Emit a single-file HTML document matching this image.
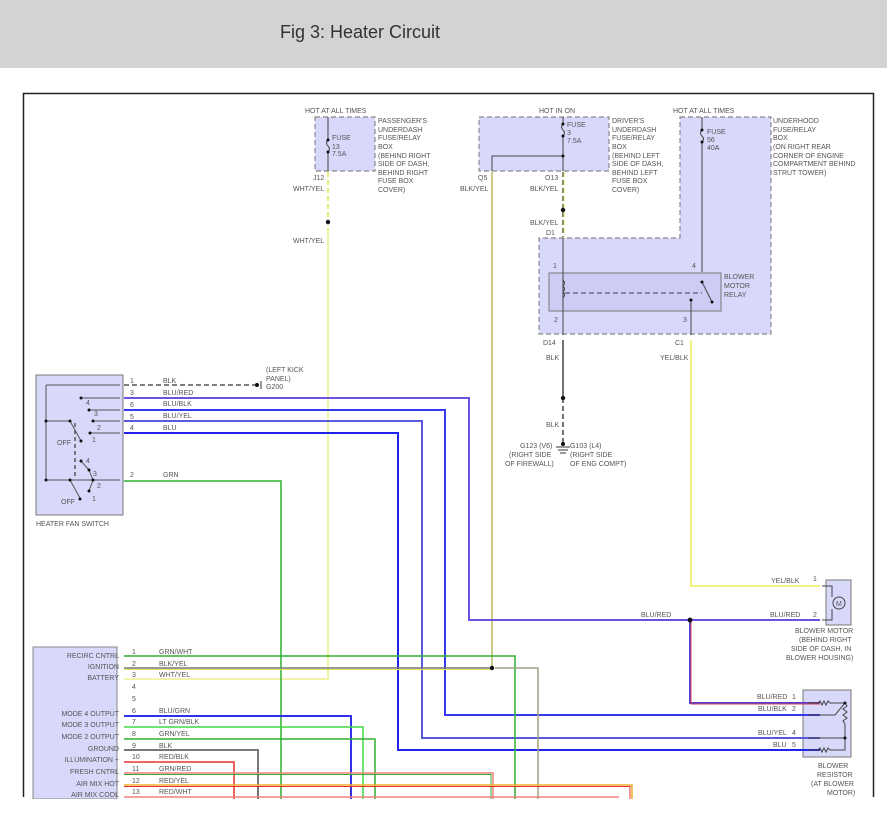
<!DOCTYPE html>
<html><head><meta charset="utf-8"><style>
html,body{margin:0;padding:0;background:#fff;width:887px;height:815px;overflow:hidden}
.hdr{position:absolute;left:0;top:0;width:887px;height:68px;background:#d3d3d3}
.hdr span{position:absolute;left:280px;top:22px;font:18px "Liberation Sans",sans-serif;color:#333}
svg{position:absolute;left:0;top:0}
text{font-family:"Liberation Sans",sans-serif;font-size:7px;fill:#555}
</style></head><body>
<div class="hdr"><span>Fig 3: Heater Circuit</span></div>
<svg width="887" height="815" viewBox="0 0 887 815">
<path d="M23.5 797 V93.5 H873.5 V797" fill="none" stroke="#222" stroke-width="1.5"/>

<g fill="#d8d8fb" stroke="#888" stroke-width="1.2" stroke-dasharray="5,3">
<rect x="315" y="117" width="60" height="54"/>
<rect x="479" y="117" width="130" height="54"/>
<path d="M680 117 H771 V334 H539 V238 H680 Z"/>
</g>
<rect x="549" y="273" width="172" height="38" fill="#ccccf5" stroke="#777" stroke-width="1"/>
<rect x="36" y="375" width="87" height="140" fill="#d8d8fb" stroke="#777"/>
<rect x="33" y="647" width="84" height="152" fill="#d8d8fb" stroke="#888"/>
<rect x="826" y="580" width="25" height="45" fill="#d8d8fb" stroke="#777"/>
<rect x="803" y="690" width="48" height="67" fill="#d8d8fb" stroke="#777"/>

<text x="305" y="113">HOT AT ALL TIMES</text>
<text x="539" y="113">HOT IN ON</text>
<text x="673" y="113">HOT AT ALL TIMES</text>
<g>
<text x="378" y="123">PASSENGER'S</text><text x="378" y="132">UNDERDASH</text><text x="378" y="140">FUSE/RELAY</text><text x="378" y="149">BOX</text><text x="378" y="158">(BEHIND RIGHT</text><text x="378" y="166">SIDE OF DASH,</text><text x="378" y="175">BEHIND RIGHT</text><text x="378" y="183">FUSE BOX</text><text x="378" y="192">COVER)</text>
<text x="612" y="123">DRIVER'S</text><text x="612" y="132">UNDERDASH</text><text x="612" y="140">FUSE/RELAY</text><text x="612" y="149">BOX</text><text x="612" y="158">(BEHIND LEFT</text><text x="612" y="166">SIDE OF DASH,</text><text x="612" y="175">BEHIND LEFT</text><text x="612" y="183">FUSE BOX</text><text x="612" y="192">COVER)</text>
<text x="773" y="123">UNDERHOOD</text><text x="773" y="132">FUSE/RELAY</text><text x="773" y="140">BOX</text><text x="773" y="149">(ON RIGHT REAR</text><text x="773" y="158">CORNER OF ENGINE</text><text x="773" y="166">COMPARTMENT BEHIND</text><text x="773" y="175">STRUT TOWER)</text>
</g>
<g stroke="#444" fill="none" stroke-width="1">
<path d="M328 117 V140 q-3 3 0 6 q3 3 0 6 V171"/>
<path d="M563 117 V124 q-3 3 0 6 q3 3 0 6 V171 M563 156 H492 V171"/>
<path d="M702 117 V130 q-3 3 0 6 q3 3 0 6 V272"/>
</g>
<g fill="#111"><circle cx="328" cy="140" r="1.5"/><circle cx="328" cy="152" r="1.5"/><circle cx="563" cy="124" r="1.5"/><circle cx="563" cy="136" r="1.5"/><circle cx="563" cy="156" r="1.5"/><circle cx="702" cy="130" r="1.5"/><circle cx="702" cy="142" r="1.5"/></g>
<text x="332" y="140">FUSE</text><text x="332" y="149">13</text><text x="332" y="156">7.5A</text>
<text x="567" y="127">FUSE</text><text x="567" y="135">3</text><text x="567" y="143">7.5A</text>
<text x="707" y="134">FUSE</text><text x="707" y="142">56</text><text x="707" y="150">40A</text>

<text x="313" y="180">J12</text><text x="293" y="191">WHT/YEL</text><text x="293" y="243">WHT/YEL</text>
<text x="478" y="180">Q5</text><text x="460" y="191">BLK/YEL</text>
<text x="545" y="180">O13</text><text x="530" y="191">BLK/YEL</text><text x="530" y="225">BLK/YEL</text><text x="546" y="235">D1</text>
<text x="553" y="268">1</text><text x="692" y="268">4</text><text x="554" y="322">2</text><text x="683" y="322">3</text>
<text x="543" y="345">D14</text><text x="546" y="360">BLK</text><text x="675" y="345">C1</text><text x="660" y="360">YEL/BLK</text>
<text x="546" y="427">BLK</text>
<text x="724" y="279">BLOWER</text><text x="724" y="288">MOTOR</text><text x="724" y="297">RELAY</text>

<path d="M328 172 V230" stroke="#e6e650" stroke-width="1.5" stroke-dasharray="5,3"/>
<path d="M328 230 V679 H124" fill="none" stroke="#eeee88" stroke-width="1.5"/>
<circle cx="328" cy="222" r="2.2" fill="#111"/>
<path d="M492 172 V668" stroke="#b8b860" stroke-width="1.5"/>
<path d="M563 172 V237" stroke="#555" stroke-width="1.5" stroke-dasharray="5,3"/>
<path d="M564 172 V237" stroke="#e6e650" stroke-width="1" stroke-dasharray="5,3"/>
<circle cx="563" cy="210" r="2.2" fill="#111"/>
<g stroke="#444" fill="none" stroke-width="1">
<path d="M563 238 V335"/>
<path d="M563 280 q3 3 0 6 q3 3 0 6 q3 3 0 6"/>
<path d="M565 293 H702" stroke-dasharray="5,3"/>
<path d="M702 282 L712 302"/>
<path d="M691 300 V335"/>
</g>
<circle cx="702" cy="282" r="1.5" fill="#111"/><circle cx="712" cy="302" r="1.5" fill="#111"/><circle cx="691" cy="300" r="1.5" fill="#111"/>
<path d="M563 340 V398" stroke="#444" stroke-width="1.5"/>
<path d="M563 398 V445" stroke="#444" stroke-width="1.5" stroke-dasharray="5,3"/>
<circle cx="563" cy="398" r="2.2" fill="#111"/>
<circle cx="563" cy="444" r="2" fill="#111"/>
<path d="M556 447 H570 M558 450 H568 M560 453 H566" stroke="#333"/>
<text x="520" y="448">G123 (V6)</text><text x="509" y="457">(RIGHT SIDE</text><text x="505" y="466">OF FIREWALL)</text>
<text x="570" y="448">G103 (L4)</text><text x="570" y="457">(RIGHT SIDE</text><text x="570" y="466">OF ENG COMPT)</text>

<path d="M691 340 V586 H820" fill="none" stroke="#eeee55" stroke-width="1.5"/>
<text x="771" y="583">YEL/BLK</text><text x="813" y="581">1</text>

<text x="36" y="526">HEATER FAN SWITCH</text>
<g stroke="#555" fill="none" stroke-width="1">
<path d="M46 385 V480 H120 M46 385 H120 M46 421 H70 L81 441 M46 480 H70 L80 498"/>
<path d="M81 398 H120 M89 410 H120 M93 421 H120 M90 433 H120 M93 480 L89 491 M81 461 L89 470 L93 480"/>
<path d="M75 423 V478" stroke-dasharray="4,3" stroke-width="1.5"/>
</g>
<g fill="#111"><circle cx="46" cy="421" r="1.5"/><circle cx="46" cy="480" r="1.5"/><circle cx="70" cy="421" r="1.5"/><circle cx="81" cy="441" r="1.5"/><circle cx="81" cy="398" r="1.5"/><circle cx="89" cy="410" r="1.5"/><circle cx="93" cy="421" r="1.5"/><circle cx="90" cy="433" r="1.5"/><circle cx="70" cy="480" r="1.5"/><circle cx="80" cy="499" r="1.5"/><circle cx="81" cy="461" r="1.5"/><circle cx="89" cy="470" r="1.5"/><circle cx="93" cy="480" r="1.5"/><circle cx="89" cy="491" r="1.5"/></g>
<text x="86" y="405">4</text><text x="94" y="416">3</text><text x="97" y="430">2</text><text x="92" y="442">1</text><text x="57" y="445">OFF</text>
<text x="86" y="463">4</text><text x="93" y="476">3</text><text x="97" y="488">2</text><text x="92" y="501">1</text><text x="61" y="504">OFF</text>
<g><text x="130" y="383">1</text><text x="130" y="395">3</text><text x="130" y="407">6</text><text x="130" y="419">5</text><text x="130" y="430">4</text><text x="130" y="477">2</text></g>
<text x="163" y="383">BLK</text><text x="163" y="395">BLU/RED</text><text x="163" y="406">BLU/BLK</text><text x="163" y="418">BLU/YEL</text><text x="163" y="430">BLU</text><text x="163" y="477">GRN</text>
<text x="266" y="372">(LEFT KICK</text><text x="266" y="381">PANEL)</text><text x="266" y="389">G200</text>
<path d="M124 385 H255" stroke="#555" stroke-width="1.5" stroke-dasharray="5,3"/>
<circle cx="257" cy="385" r="2" fill="#111"/><path d="M261 381 V389" stroke="#333"/>

<path d="M124 398 H469 V620 H820" fill="none" stroke="#7050e0" stroke-width="2"/>
<path d="M124 410 H445 V715 H820" fill="none" stroke="#3838ee" stroke-width="2"/>
<path d="M124 421 H422 V738 H820" fill="none" stroke="#5a5ae0" stroke-width="2"/>
<path d="M124 433 H398 V750 H820" fill="none" stroke="#2222f0" stroke-width="2"/>
<path d="M690 620 V703 H820" fill="none" stroke="#5040d8" stroke-width="2"/>
<path d="M691 621 V704 H820" fill="none" stroke="#d04050" stroke-width="1"/>
<circle cx="690" cy="620" r="2.4" fill="#111"/>
<path d="M124 481 H281 V800" fill="none" stroke="#30b030" stroke-width="1.5"/>
<text x="641" y="617">BLU/RED</text><text x="770" y="617">BLU/RED</text><text x="813" y="617">2</text>

<circle cx="839" cy="603" r="6" fill="none" stroke="#444"/><text x="836" y="606">M</text>
<path d="M822 586 H832 V597 M822 620 H832 V609" fill="none" stroke="#444"/>
<text x="795" y="633">BLOWER MOTOR</text><text x="799" y="642">(BEHIND RIGHT</text><text x="791" y="651">SIDE OF DASH, IN</text><text x="786" y="660">BLOWER HOUSING)</text>
<g stroke="#444" fill="none"><path d="M808 703 H818 l2 -2 l2 4 l2 -4 l2 4 l2 -4 l2 2 H845 M808 715 H835 L845 703 M845 703 l2 3 l-4 3 l4 3 l-4 3 l4 3 l-4 3 l2 3 V738 H808 M808 750 H818 l2 -2 l2 4 l2 -4 l2 4 l2 -4 l2 2 H845 V738"/></g>
<circle cx="845" cy="703" r="1.5" fill="#111"/><circle cx="845" cy="738" r="1.5" fill="#111"/>
<text x="757" y="699">BLU/RED</text><text x="792" y="699">1</text>
<text x="758" y="711">BLU/BLK</text><text x="792" y="711">2</text>
<text x="758" y="735">BLU/YEL</text><text x="792" y="735">4</text>
<text x="773" y="747">BLU</text><text x="792" y="747">5</text>
<text x="818" y="768">BLOWER</text><text x="817" y="777">RESISTOR</text><text x="811" y="786">(AT BLOWER</text><text x="827" y="795">MOTOR)</text>

<g text-anchor="end">
<text x="119" y="658">RECIRC CNTRL</text><text x="119" y="669">IGNITION</text><text x="119" y="680">BATTERY</text>
<text x="119" y="716">MODE 4 OUTPUT</text><text x="119" y="727">MODE 3 OUTPUT</text><text x="119" y="739">MODE 2 OUTPUT</text><text x="119" y="751">GROUND</text><text x="119" y="762">ILLUMINATION +</text><text x="119" y="774">FRESH CNTRL</text><text x="119" y="786">AIR MIX HOT</text><text x="119" y="797">AIR MIX COOL</text>
</g>
<g><text x="132" y="654">1</text><text x="132" y="666">2</text><text x="132" y="677">3</text><text x="132" y="689">4</text><text x="132" y="701">5</text><text x="132" y="713">6</text><text x="132" y="724">7</text><text x="132" y="736">8</text><text x="132" y="748">9</text><text x="132" y="759">10</text><text x="132" y="771">11</text><text x="132" y="783">12</text><text x="132" y="794">13</text></g>
<g><text x="159" y="654">GRN/WHT</text><text x="159" y="666">BLK/YEL</text><text x="159" y="677">WHT/YEL</text><text x="159" y="713">BLU/GRN</text><text x="159" y="724">LT GRN/BLK</text><text x="159" y="736">GRN/YEL</text><text x="159" y="748">BLK</text><text x="159" y="759">RED/BLK</text><text x="159" y="771">GRN/RED</text><text x="159" y="783">RED/YEL</text><text x="159" y="794">RED/WHT</text></g>
<g fill="none" stroke-width="1.5">
<path d="M124 656 H515 V800" stroke="#30b030"/>
<path d="M124 668 H490" stroke="#777"/><path d="M124 669.5 H490" stroke="#e6e650" stroke-width="1"/>
<path d="M495 668 H538 V800" stroke="#a0a080"/>
<path d="M124 716 H351 V800" stroke="#3030e8" stroke-width="2"/>
<path d="M124 727 H363 V800" stroke="#40d840"/>
<path d="M124 739 H375 V800" stroke="#30b030"/>
<path d="M124 750 H258 V800" stroke="#777" stroke-width="2"/>
<path d="M124 762 H234 V800" stroke="#e83030"/>
<path d="M124 773 H493 V800" stroke="#f08080"/><path d="M124 774.5 H491 V800" stroke="#30b030" stroke-width="1"/>
<path d="M124 785 H632 V800" stroke="#f0b030"/><path d="M124 786.5 H630 V800" stroke="#e83030" stroke-width="1"/>
<path d="M124 797 H619" stroke="#f08080"/>
</g>
<circle cx="492" cy="668" r="2.2" fill="#111"/>
<rect x="0" y="799" width="887" height="16" fill="#fff"/>
</svg>
</body></html>
